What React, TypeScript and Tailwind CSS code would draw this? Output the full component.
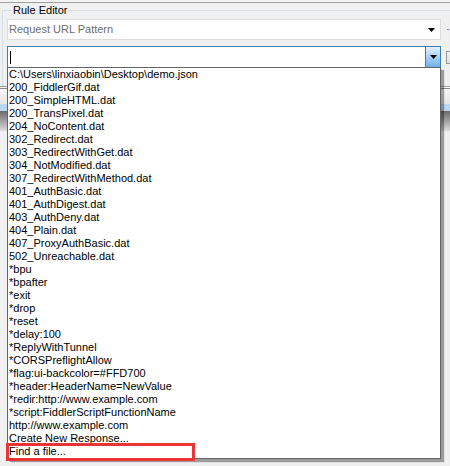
import React from "react";

const items = [
  "C:\\Users\\linxiaobin\\Desktop\\demo.json",
  "200_FiddlerGif.dat",
  "200_SimpleHTML.dat",
  "200_TransPixel.dat",
  "204_NoContent.dat",
  "302_Redirect.dat",
  "303_RedirectWithGet.dat",
  "304_NotModified.dat",
  "307_RedirectWithMethod.dat",
  "401_AuthBasic.dat",
  "401_AuthDigest.dat",
  "403_AuthDeny.dat",
  "404_Plain.dat",
  "407_ProxyAuthBasic.dat",
  "502_Unreachable.dat",
  "*bpu",
  "*bpafter",
  "*exit",
  "*drop",
  "*reset",
  "*delay:100",
  "*ReplyWithTunnel",
  "*CORSPreflightAllow",
  "*flag:ui-backcolor=#FFD700",
  "*header:HeaderName=NewValue",
  "*redir:http://www.example.com",
  "*script:FiddlerScriptFunctionName",
  "http://www.example.com",
  "Create New Response...",
  "Find a file...",
];

function Arrow() {
  return (
    <svg width="7" height="4" viewBox="0 0 7 4" className="block">
      <polygon points="0,0 7,0 3.5,4" fill="#000" />
    </svg>
  );
}

export default function App() {
  return (
    <div className="relative w-[450px] h-[466px] bg-[#f0f0f0] overflow-hidden font-['Liberation_Sans',Arial,sans-serif] text-[11px] text-black">
      <div className="h-[2px] bg-[#f4f4f4]" />
      <div className="h-px bg-[#a0a0a0]" />
      <fieldset className="ml-[2px] mt-px w-[460px] border-l border-t border-[#d5dfe5] pl-[4px] pb-[18px] m-0 p-0 min-w-0">
        <legend className="ml-[5px] px-[1px] leading-[13px]">Rule Editor</legend>
        <div className="mt-[2px] flex items-center">
          <div className="w-[434px] h-[21px] bg-white border border-[#dcdcdc] flex items-center pl-[1px] pr-[5px]">
            <span className="flex-1 text-[#6d6d6d] leading-[13px]">Request URL Pattern</span>
            <Arrow />
          </div>
          <div className="ml-[6px] w-[2px] h-px bg-[#7070e0] -mt-[1px]" />
        </div>
        <div className="mt-[6px] flex items-center">
          <div className="w-[434px] h-[22px] bg-white border border-[#3c7fb1] flex items-stretch">
            <div className="flex-1 flex items-center pl-[2px]">
              <div className="w-px h-[13px] bg-black" />
            </div>
            <div className="w-[15px] border-l border-[#3c7fb1] bg-gradient-to-b from-[#e3f1fc] via-[#a9d1f4] to-[#6fb0e8] flex items-center justify-center">
              <Arrow />
            </div>
          </div>
          <div className="ml-[5px] w-[14px] h-[13px] border border-[#9a9a9a] bg-gradient-to-b from-[#f4f4f4] to-[#dedede] shrink-0" />
        </div>
      </fieldset>
      <div className="h-px bg-[#a0a0a0]" />
      <div className="h-px bg-[#fafafa]" />
      <div className="h-px bg-[#8a8a8a]" />
      <div className="h-[15px] bg-gradient-to-b from-[#f6f6f6] to-[#e6e6e6]" />
      <div className="h-[7px] bg-[#b9d7f3]" />
      <div className="h-[20px] bg-gradient-to-b from-[#6b6b6b] to-[#dcdcdc]" />

      <div className="absolute left-[7px] top-[67px] w-[434px] h-[392px] bg-white border border-[#646464] shadow-[3px_3px_1px_rgba(0,0,0,0.35)] pl-px">
        {items.map((t) => (
          <div key={t} className="h-[13px] leading-[13px] whitespace-nowrap">
            {t}
          </div>
        ))}
      </div>
      <div className="absolute left-[6px] top-[443px] w-[189px] h-[18px] border-[3px] border-[#ec3338]" />
    </div>
  );
}
